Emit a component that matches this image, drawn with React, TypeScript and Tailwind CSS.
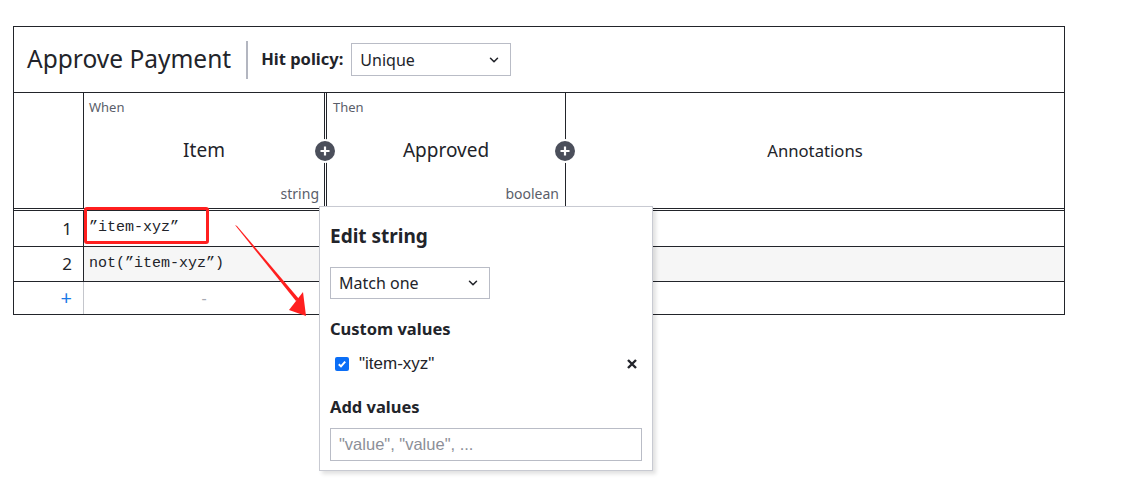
import React from 'react';
import { ChevronDown } from 'lucide-react';

const sans = { fontFamily: '"Noto Sans", "Open Sans", sans-serif' };
const mono = { fontFamily: '"Liberation Mono", monospace' };
const arial = { fontFamily: '"Liberation Sans", Arial, sans-serif' };

const PlusDot: React.FC<{ className: string }> = ({ className }) => (
  <div className={`absolute w-[24px] h-[24px] rounded-full bg-white flex items-center justify-center ${className}`}>
    <div className="w-[20px] h-[20px] rounded-full bg-[#4b4f5b] flex items-center justify-center">
      <svg width="12" height="12" viewBox="0 0 12 12">
        <path d="M6 1.5v9M1.5 6h9" stroke="#fff" strokeWidth="2.2" />
      </svg>
    </div>
  </div>
);

const SelectBox: React.FC<{ value: string; className: string }> = ({ value, className }) => (
  <div className={`flex items-center justify-between border border-[#b9bcc6] bg-white pl-[8px] pr-[9px] text-[16px] text-[#22242a] ${className}`}>
    <span>{value}</span>
    <ChevronDown size={14} strokeWidth={2.6} className="text-[#22242a]" />
  </div>
);

const App: React.FC = () => {
  return (
    <div className="relative w-[1134px] h-[490px] bg-white text-[#22242a] pt-[26px] pl-[13px]" style={sans}>
      <div className="relative w-[1052px] border border-[#22242a]">
        {/* title */}
        <div className="h-[66px] border-b border-[#22242a] flex items-center pl-[13px]">
          <span className="text-[24.5px] leading-none">Approve Payment</span>
          <div className="w-[2px] h-[38px] bg-[#b3b6c0] ml-[15px] mr-[13px]" />
          <span className="text-[16.5px] font-bold">Hit policy:</span>
          <SelectBox value="Unique" className="ml-[8px] w-[160px] h-[33px]" />
        </div>

        {/* header */}
        <div className="flex h-[118px] border-b-[3px] border-double border-[#22242a]">
          <div className="w-[70px] border-r border-[#22242a]" />
          <div className="w-[243px] border-r-[3px] border-double border-[#22242a] flex flex-col px-[5px] pt-[5px] pb-[4px]">
            <span className="text-[13px] text-[#5a5e6a]">When</span>
            <span className="flex-1 flex items-center justify-center text-[19px]">Item</span>
            <span className="text-[14px] text-[#5a5e6a] text-right">string</span>
          </div>
          <div className="w-[239px] border-r border-[#22242a] flex flex-col px-[6px] pt-[5px] pb-[4px]">
            <span className="text-[13px] text-[#5a5e6a]">Then</span>
            <span className="flex-1 flex items-center justify-center text-[19px]">Approved</span>
            <span className="text-[14px] text-[#5a5e6a] text-right">boolean</span>
          </div>
          <div className="flex-1 flex items-center justify-center text-[16.7px]">Annotations</div>
        </div>

        {/* rows */}
        <div className="flex h-[36px] border-b border-[#22242a]">
          <div className="w-[70px] border-r border-[#22242a] flex items-center justify-end pr-[11px] text-[17px]">1</div>
          <div className="w-[243px] border-r-[3px] border-double border-[#22242a] flex items-center pl-[5px] text-[15px]" style={mono}>
            ”item-xyz”
          </div>
          <div className="w-[239px] border-r border-[#22242a]" />
          <div className="flex-1" />
        </div>
        <div className="flex h-[35px] border-b border-[#22242a] bg-[#f6f6f6]">
          <div className="w-[70px] border-r border-[#22242a] bg-white flex items-center justify-end pr-[11px] text-[17px]">2</div>
          <div className="w-[243px] border-r-[3px] border-double border-[#22242a] flex items-center pl-[5px] text-[15px]" style={mono}>
            not(”item-xyz”)
          </div>
          <div className="w-[239px] border-r border-[#22242a]" />
          <div className="flex-1" />
        </div>
        <div className="flex h-[32px]">
          <div className="w-[70px] border-r border-[#c4c6cc] flex items-center justify-end pr-[11px] text-[20px] text-[#1b7ae6]">+</div>
          <div className="w-[240px] flex items-center justify-center text-[16px] text-[#a8abb3]">-</div>
          <div className="flex-1" />
        </div>

        <PlusDot className="left-[299px] top-[112px]" />
        <PlusDot className="left-[539px] top-[112px]" />

        {/* highlight on first cell */}
        <div className="absolute left-[70px] top-[180px] w-[125px] h-[37px] border-[3px] border-[#ff1f1f] rounded-[3px]" />
      </div>

      {/* arrow */}
      <svg className="absolute left-0 top-0 pointer-events-none" width="1134" height="490">
        <polygon points="235,225 237,226 299,299 296,301" fill="#ff1f1f" />
        <polygon points="289,310 306,316 303,292" fill="#ff1f1f" />
      </svg>

      {/* popup */}
      <div className="absolute left-[319px] top-[206px] w-[334px] h-[265px] bg-white border border-[#c8cad2] shadow-[3px_3px_4px_rgba(0,0,0,0.12)] px-[10px] pt-[20px]">
        <div className="text-[19px] font-bold leading-none">Edit string</div>
        <SelectBox value="Match one" className="mt-[21px] w-[160px] h-[32px]" />
        <div className="mt-[22px] text-[16.5px] font-bold leading-none">Custom values</div>
        <div className="mt-[14px] h-[24px] flex items-center pl-[5px] pr-[5px]">
          <span className="w-[14px] h-[14px] rounded-[2px] bg-[#0b6ef6] flex items-center justify-center">
            <svg width="10" height="10" viewBox="0 0 10 10">
              <path d="M1.8 5.2l2.2 2.2 4.2-4.8" stroke="#fff" strokeWidth="2" fill="none" />
            </svg>
          </span>
          <span className="ml-[10px] text-[17px]" style={arial}>"item-xyz"</span>
          <svg className="ml-auto" width="10" height="10" viewBox="0 0 10 10">
            <path d="M1 1l8 8M9 1l-8 8" stroke="#22242a" strokeWidth="2.4" />
          </svg>
        </div>
        <div className="mt-[23px] text-[16.5px] font-bold leading-none">Add values</div>
        <div className="mt-[13px] h-[33px] border border-[#b9bcc6] flex items-center pl-[8px] text-[16.5px] text-[#8c8f98]" style={arial}>
          "value", "value", ...
        </div>
      </div>
    </div>
  );
};

export default App;
